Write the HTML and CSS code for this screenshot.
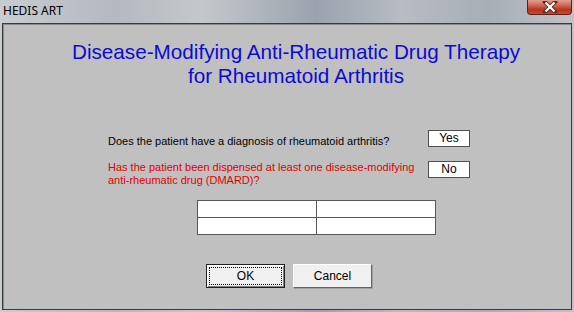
FILE: index.html
```html
<!DOCTYPE html>
<html>
<head>
  <meta charset="UTF-8">
  <link rel="stylesheet" href="styles.css">
</head>
<body>
  <div class="window">
    <div class="title-bar">
      <div class="title-text">HEDIS ART</div>
      <div class="close-btn">
        <svg width="16" height="12" viewBox="0 0 16 12">
          <path d="M3 1 L13 11 M13 1 L3 11" stroke="#5a2a22" stroke-width="4" stroke-linecap="square"/>
          <path d="M3.5 1.5 L12.5 10.5 M12.5 1.5 L3.5 10.5" stroke="#ffffff" stroke-width="2.2"/>
        </svg>
      </div>
    </div>
    <div class="client">
      <div class="heading">Disease-Modifying Anti-Rheumatic Drug Therapy<br>for Rheumatoid Arthritis</div>

      <div class="questions">
        <div class="q-row first">
          <div class="q-text">Does the patient have a diagnosis of rheumatoid arthritis?</div>
          <div class="answer">Yes</div>
        </div>
        <div class="q-row second">
          <div class="q-text alert">Has the patient been dispensed at least one disease-modifying anti-rheumatic drug (DMARD)?</div>
          <div class="answer">No</div>
        </div>
      </div>

      <div class="grid-box">
        <div class="cell"></div>
        <div class="cell"></div>
        <div class="cell"></div>
        <div class="cell"></div>
      </div>

      <div class="buttons">
        <div class="btn default"><span class="focus">OK</span></div>
        <div class="btn">Cancel</div>
      </div>
    </div>
  </div>
</body>
</html>
```

FILE: styles.css
```css
body {
  margin: 0;
  padding: 0;
  width: 574px;
  height: 312px;
  overflow: hidden;
  font-family: "Liberation Sans", Arial, sans-serif;
  background: linear-gradient(90deg, #c9ccd0 0%, #b4b9c0 20%, #c4c8cc 35%, #9aa3ad 55%, #b7bcc2 70%, #a7aeb6 85%, #bfc3c8 100%);
}

.window {
  padding: 0 2px 2px 2px;
}

.title-bar {
  height: 23px;
  display: flex;
  justify-content: space-between;
  align-items: flex-start;
}

.title-text {
  font-family: "Noto Sans", sans-serif;
  font-size: 12px;
  line-height: 16px;
  padding: 3px 0 0 1px;
  color: #000;
}

.close-btn {
  width: 45px;
  height: 15px;
  box-sizing: border-box;
  border: 1px solid #5c2018;
  border-top: none;
  border-radius: 0 0 4px 4px;
  background: linear-gradient(180deg, #e0a090 0%, #d06550 40%, #b8321e 70%, #c84a30 100%);
  display: flex;
  justify-content: center;
  align-items: center;
}

.client {
  height: 285px;
  background: #c0c0c0;
  border: 1px solid #3a3a3a;
  box-shadow: inset 1px 1px 0 #8c8c8c;
  font-size: 11px;
  color: #000;
}

.heading {
  padding: 16px 0 0 18px;
  text-align: center;
  font-size: 20.7px;
  line-height: 24px;
  color: #0b0bd2;
}

.questions {
  margin-top: 42px;
  padding-left: 105px;
}

.q-row {
  display: flex;
  align-items: flex-start;
}

.q-row.second {
  margin-top: 13px;
}

.q-text {
  width: 312px;
  margin-right: 8px;
  line-height: 13px;
}

.first .q-text {
  margin-top: 5px;
}

.alert {
  color: #e00000;
}

.answer {
  width: 42px;
  height: 17px;
  box-sizing: border-box;
  background: #fff;
  border: 1px solid #505050;
  font-size: 12px;
  line-height: 15px;
  text-align: center;
}

.grid-box {
  margin: 13px 0 0 194px;
  width: 239px;
  display: grid;
  grid-template-columns: 119px 119px;
  grid-template-rows: 17px 17px;
  border: 1px solid #585858;
  border-right: none;
  border-bottom: none;
  box-sizing: border-box;
  height: 35px;
}

.cell {
  background: #fff;
  border-right: 1px solid #585858;
  border-bottom: 1px solid #585858;
}

.buttons {
  margin-top: 29px;
  padding-left: 4px;
  display: flex;
  justify-content: center;
  gap: 8px;
}

.btn {
  width: 79px;
  height: 24px;
  box-sizing: border-box;
  background: #f0f0f0;
  border: 1px solid;
  border-color: #ffffff #646464 #646464 #ffffff;
  box-shadow: 1px 1px 0 #a0a0a0;
  font-size: 12px;
  line-height: 22px;
  text-align: center;
  color: #000;
}

.btn.default {
  border: 1px solid #202020;
  padding: 2px;
  line-height: 18px;
  box-shadow: inset 1px 1px 0 #ffffff, inset -1px -1px 0 #808080;
}

.focus {
  display: block;
  height: 18px;
  box-sizing: border-box;
  border: 1px dotted #000;
  line-height: 16px;
}
```
